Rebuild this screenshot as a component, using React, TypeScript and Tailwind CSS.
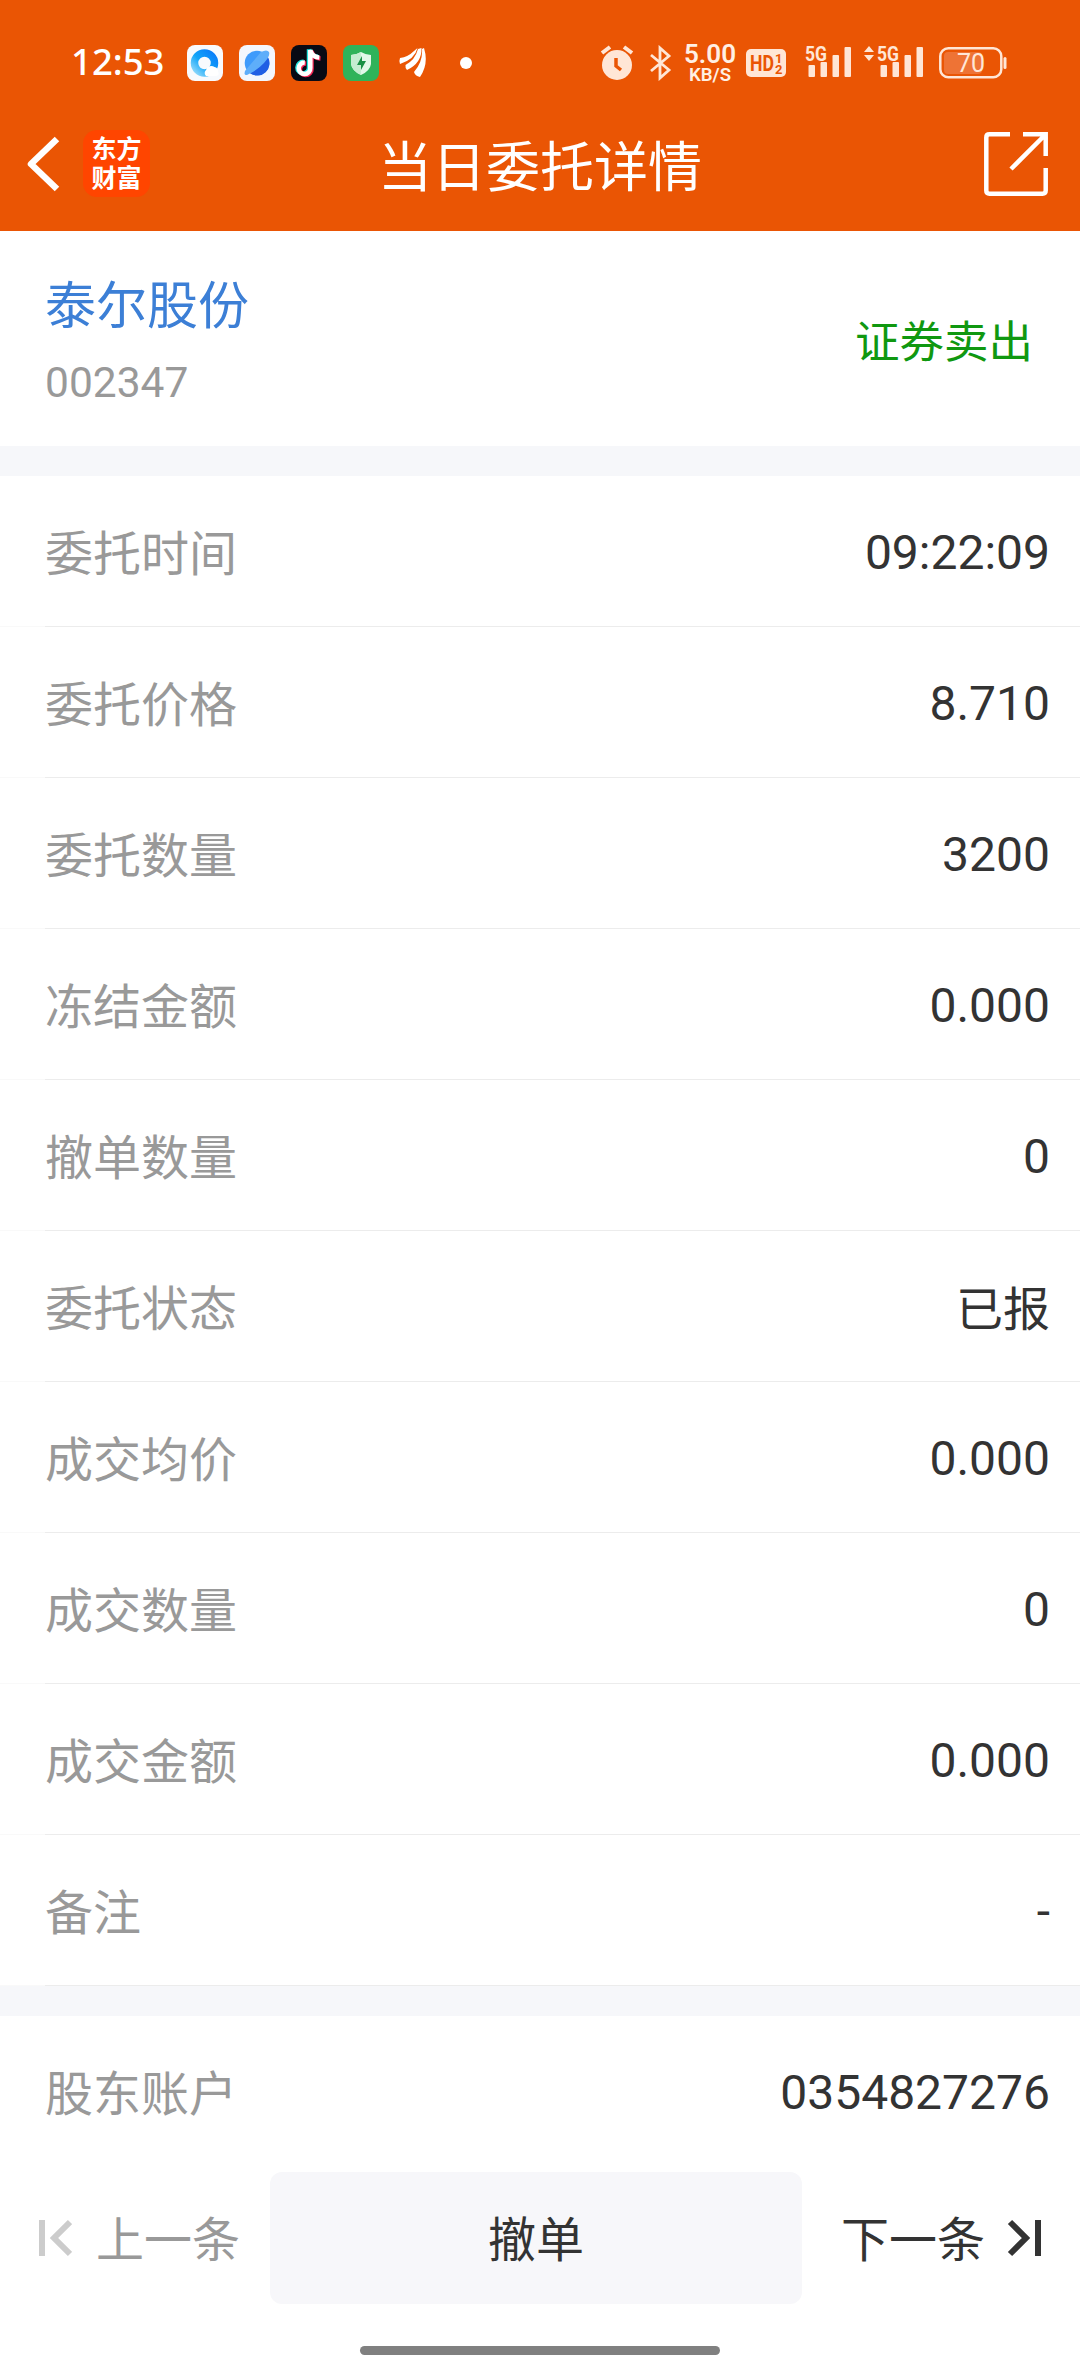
import type { ReactNode } from "react";

const orderRows = [
  { label: "委托时间", value: "09:22:09" },
  { label: "委托价格", value: "8.710" },
  { label: "委托数量", value: "3200" },
  { label: "冻结金额", value: "0.000" },
  { label: "撤单数量", value: "0" },
  { label: "委托状态", value: "已报", cjk: true },
  { label: "成交均价", value: "0.000" },
  { label: "成交数量", value: "0" },
  { label: "成交金额", value: "0.000" },
  { label: "备注", value: "-" },
];

const SignalBars = () => (
  <svg className="w-[47px] h-[36px] overflow-visible" viewBox="0 0 47 36" fill="#ffe6d6">
    <text x="0" y="15.500" fontFamily="Roboto, sans-serif" fontSize="21" fontWeight="700" textLength="22" lengthAdjust="spacingAndGlyphs">
      5G
    </text>
    <rect x="3.5" y="20" width="6.5" height="12" rx="1" />
    <rect x="15.5" y="17" width="6.5" height="15" rx="1" />
    <rect x="27.5" y="10" width="6.5" height="22" rx="1" />
    <rect x="39.5" y="2" width="6.5" height="30" rx="1" />
  </svg>
);

const AppTile = ({ children }: { children: ReactNode }) => (
  <svg className="w-9 h-9 mr-4" viewBox="0 0 36 36">
    {children}
  </svg>
);

const StatusBar = () => (
  <div className="flex h-[126px] items-center justify-between pl-[71px] pr-[73px]">
    <div className="flex items-center">
      <span className="w-[94px] mr-[22px] pb-[3px] text-[36.5px] leading-none font-medium text-white font-['Noto_Sans',sans-serif]">
        12:53
      </span>

      {/* Browser */}
      <AppTile>
        <defs>
          <linearGradient id="ring" x1="1" y1="0" x2="0" y2="1">
            <stop offset="0" stopColor="#0a7dfa" />
            <stop offset="0.55" stopColor="#12a5f8" />
            <stop offset="1" stopColor="#8fd8fb" />
          </linearGradient>
        </defs>
        <rect width="36" height="36" rx="8" fill="#f8fafd" />
        <circle cx="17.5" cy="18" r="10" fill="none" stroke="url(#ring)" strokeWidth="7.5" />
        <path d="M19 31a4.500 4.500 0 0 1 0-6a5.500 5.500 0 0 1 8.500-3a4.500 4.500 0 0 1 3.500 4.500q2 4-2 4.500z" fill="#fff" />
      </AppTile>

      {/* Planet */}
      <AppTile>
        <rect width="36" height="36" rx="8" fill="#f3f7fd" />
        <circle cx="18" cy="18" r="12.3" fill="#3f9bfb" />
        <path d="M28.500 11.500A12.300 12.300 0 0 1 11 28.200Q22 22 28.500 11.500z" fill="#205fe4" />
        <path d="M22 7Q28 4 30 7q1.500 4-5 11T9 29.500Q6 31 5.500 28.500Q6 25 8 23.500z" fill="#5eaefa" />
      </AppTile>

      {/* Music note */}
      <AppTile>
        <rect width="36" height="36" rx="8" fill="#080a14" />
        <g fill="none" strokeWidth="4.500">
          <path d="M19 5v18a5.800 5.800 0 1 1-5.500-5.500M19 5q1.500 7 9 7.500" stroke="#25e5df" transform="translate(-1 -.7)" />
          <path d="M19 5v18a5.800 5.800 0 1 1-5.500-5.500M19 5q1.500 7 9 7.500" stroke="#f72857" transform="translate(1.500 1)" />
          <path d="M19 5v18a5.800 5.800 0 1 1-5.500-5.500M19 5q1.500 7 9 7.500" stroke="#fff" transform="translate(.3 0)" />
        </g>
      </AppTile>

      {/* Security shield */}
      <AppTile>
        <rect width="36" height="36" rx="8" fill="#2fb35a" />
        <path d="M18 7Q23 10 28 10v9q-1 7-10 11Q9 26 8 19v-9q5 0 10-3z" fill="#e2f8e9" />
        <path d="M18 7Q13 10 8 10v9q1 7 10 11z" fill="#c5edd1" />
        <path d="M19 11l-5 9h4v5l5-9h-4z" fill="#189044" />
      </AppTile>

      <svg className="w-[28px] h-[32px] ml-[4px]" viewBox="0 0 28 32" fill="#fff">
        <path d="M1 17Q0 13 1 11Q9 10 15 4l3.500-3Q16 12 1 17z" />
        <path d="M8 23Q6 21 6.500 18Q16 13 19 2l3.500-1Q23 16 8 23z" />
        <path d="M21 30Q16 29 15 25Q24 15 23 2l2-1Q30 17 21 30z" />
      </svg>
      <span className="w-3 h-3 ml-[33px] rounded-full bg-white" />
    </div>

    <div className="flex items-center">
      <svg className="w-[34px] h-[36px]" viewBox="0 0 34 36">
        <circle cx="17" cy="20" r="15" fill="#ffe6d6" />
        <path d="M2 8l8-6M32 8l-8-6" stroke="#ffe6d6" strokeWidth="4" />
        <path d="M16 13v8l5 4" fill="none" stroke="#ea5504" strokeWidth="3.500" />
      </svg>
      <svg className="w-[24px] h-[36px] ml-[15px]" viewBox="0 0 24 36" fill="none" stroke="#ffe6d6" strokeWidth="2.800">
        <path d="M2 10l18 15-9 8V3l9 8L2 26" />
      </svg>
      <svg className="w-[54px] h-[40px] ml-[10px] overflow-visible" viewBox="0 0 54 40" fill="#fff0e4" fontFamily="Roboto, sans-serif">
        <text x="1" y="20" fontSize="26" fontWeight="600" textLength="52" lengthAdjust="spacingAndGlyphs">5.00</text>
        <text x="6" y="37.500" fontSize="19" fontWeight="600" textLength="42" lengthAdjust="spacingAndGlyphs">KB/S</text>
      </svg>
      <svg className="w-[40px] h-[28px] ml-[9px] overflow-visible" viewBox="0 0 40 28" fontFamily="Roboto, sans-serif" fontWeight="700" fill="#ea5504">
        <rect width="40" height="28" rx="5" fill="#ffe6d6" />
        <text x="4" y="22" fontSize="22" textLength="24" lengthAdjust="spacingAndGlyphs">HD</text>
        <text x="29" y="13.500" fontSize="13">1</text>
        <text x="29" y="25" fontSize="13">2</text>
      </svg>
      <div className="ml-[19px] flex">
        <SignalBars />
      </div>
      <svg className="w-[12px] h-[36px] ml-[11px]" viewBox="0 0 12 36" fill="#ffe6d6">
        <path d="M1 7l5-6 5 6zM1 10l5 6 5-6z" />
      </svg>
      <div className="ml-[2px] flex">
        <SignalBars />
      </div>
      <svg className="w-[68px] h-[32px] ml-[15px] overflow-visible" viewBox="0 0 68 32">
        <rect x="1.300" y="1.300" width="61" height="29" rx="8" fill="none" stroke="#ffe6d6" strokeWidth="2.500" />
        <rect x="5" y="5" width="38" height="22" rx="4" fill="#ee7335" />
        <rect x="64.500" y="10" width="3" height="12" rx="1.500" fill="#ffe6d6" />
        <text x="32" y="25" textAnchor="middle" fontFamily="Roboto, sans-serif" fontSize="25" fill="#ffe6d6">70</text>
      </svg>
    </div>
  </div>
);

const TitleBar = () => (
  <div className="flex h-[105px] items-start justify-between pl-[26px] pr-[32px] text-white">
    <div className="flex w-[200px] items-center pt-[4px]">
      <svg className="w-[34px] h-[56px]" viewBox="0 0 34 56" fill="none" stroke="#fff" strokeWidth="6.500" strokeLinejoin="round">
        <path d="M31 3L5 28l26 25" />
      </svg>
      <div className="ml-[23px] flex h-[67px] w-[67px] flex-col items-center justify-center rounded-[14px] bg-[#ff4500] text-[25px] leading-[29px] font-bold">
        <span>东方</span>
        <span>财富</span>
      </div>
    </div>
    <h1 className="pt-[3px] text-[54px] leading-[80px]">当日委托详情</h1>
    <div className="flex w-[194px] justify-end pt-[6px]">
      <svg className="w-[64px] h-[64px]" viewBox="0 0 64 64" fill="none" stroke="#fff" strokeWidth="4.500">
        <path d="M26 2.300H5.500q-3.200 0-3.200 3.200v53q0 3.200 3.200 3.200h53q3.200 0 3.200-3.200V36" />
        <path d="M39 2.300h22.700V24M61 3L27 37" />
      </svg>
    </div>
  </div>
);

const DetailRow = ({ label, value, cjk }: { label: string; value: string; cjk?: boolean }) => (
  <div className="flex h-[150px] items-center justify-between pl-[45px] pr-[30px] text-[48px] leading-none">
    <span className="pt-[7px] text-[#999999]">{label}</span>
    <span className={cjk ? "pt-[7px] text-[47px] text-[#333333]" : "pt-[3px] text-[#333333]"}>{value}</span>
  </div>
);

const App = () => {
  return (
    <div className="flex h-[2376px] w-[1080px] flex-col overflow-hidden bg-white font-[Roboto,'Noto_Sans_CJK_SC',sans-serif]">
      <header className="h-[231px] shrink-0 bg-[#ea5504]">
        <StatusBar />
        <TitleBar />
      </header>

      {/* Stock */}
      <section className="flex h-[215px] shrink-0 justify-between pl-[45px] pr-[47px]">
        <div className="pt-[44px]">
          <div className="text-[51px] leading-[64px] text-[#3c7fd6]">泰尔股份</div>
          <div className="mt-[19px] text-[42.5px] leading-[50px] text-[#999999]">002347</div>
        </div>
        <div className="pt-[82px] text-[44.5px] leading-[60px] text-[#109810]">证券卖出</div>
      </section>
      <div className="h-[30px] shrink-0 bg-[#f6f7fa]" />

      {/* Order details */}
      <section className="shrink-0">
        {orderRows.map((row) => (
          <div key={row.label}>
            <DetailRow {...row} />
            <div className="flex h-px">
              <div className="w-[45px] bg-[#f9f9f9]" />
              <div className="flex-1 bg-[#ececec]" />
            </div>
          </div>
        ))}
      </section>
      <div className="h-[30px] shrink-0 bg-[#f6f7fa]" />
      <DetailRow label="股东账户" value="0354827276" />

      {/* Bottom actions */}
      <footer className="mt-[6px] flex h-[132px] shrink-0 items-center text-[48px] leading-none text-[#333333]">
        <button className="flex w-[270px] items-center pl-[38px] text-[#999999]">
          <svg className="w-[34px] h-[38px] mr-[24px]" viewBox="0 0 34 38" fill="none" stroke="#cccccc" strokeWidth="6">
            <path d="M4 1v36M32 3L16 19l16 16" />
          </svg>
          <span className="pt-[6px]">上一条</span>
        </button>
        <button className="h-[132px] w-[532px] rounded-[12px] bg-[#f7f7fa] pt-[6px]">撤单</button>
        <button className="flex items-center pl-[39px]">
          <span className="pt-[6px]">下一条</span>
          <svg className="w-[36px] h-[38px] ml-[22px]" viewBox="0 0 36 38" fill="none" stroke="#333333" strokeWidth="6">
            <path d="M31 1v36M3 3l16 16L3 35" />
          </svg>
        </button>
      </footer>
      <div className="mx-auto mt-[42px] h-[9px] w-[360px] shrink-0 rounded-full bg-[#808080]" />
    </div>
  );
};

export default App;
